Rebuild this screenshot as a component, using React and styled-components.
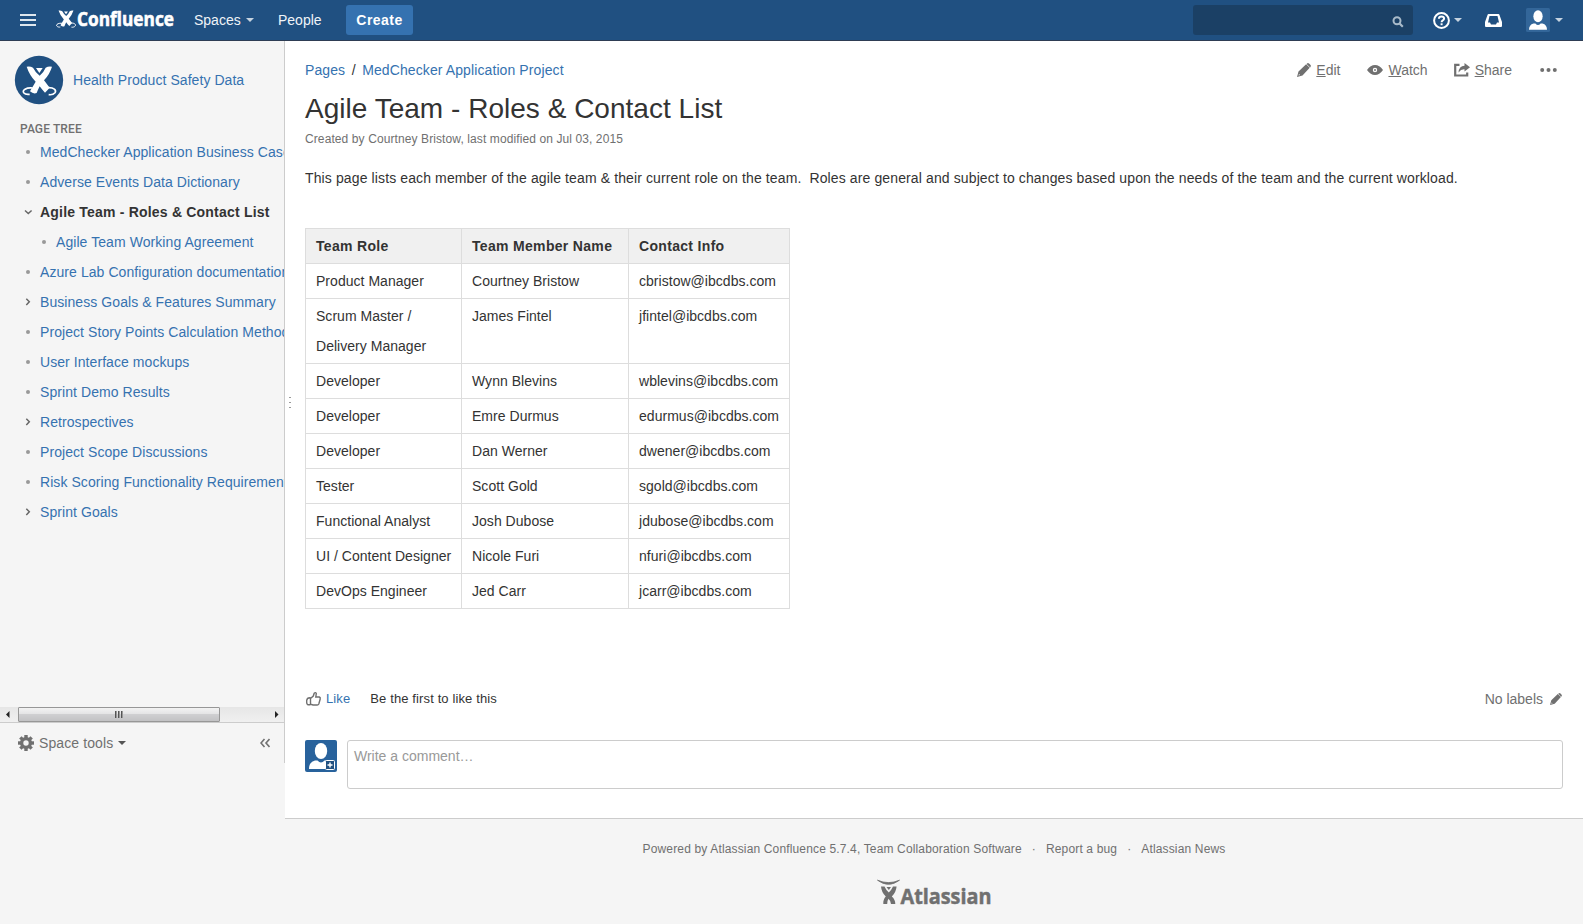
import React from "react";
import styled, { createGlobalStyle, css } from "styled-components";

const GlobalStyle = createGlobalStyle`
  * { box-sizing: border-box; }
  html, body { margin: 0; padding: 0; }
  body {
    background: #f5f5f5;
    color: #333;
    font: 14px/20px Arial, "Liberation Sans", sans-serif;
    overflow: hidden;
  }
`;

const LINK = "#3572b0";
const GREY = "#707070";

/* ---------- header ---------- */
const Header = styled.header`
  display: flex;
  align-items: center;
  height: 41px;
  padding: 0 20px;
  background: #205081;
  border-bottom: 1px solid #2e3d54;
  color: #fff;
`;
const MenuIcon = styled.svg`
  width: 16px;
  height: 12px;
  margin-right: 20px;
`;
const BrandLogo = styled.svg`
  width: 120px;
  height: 24px;
  margin-right: 18px;
`;
const NavItem = styled.a`
  display: flex;
  align-items: center;
  width: ${(p) => p.$width}px;
  color: #f0f4f8;
`;
const Caret = styled.span`
  border: 4px solid transparent;
  border-top-color: currentColor;
  border-bottom: 0;
  margin-left: ${(p) => p.$gap ?? 5}px;
  color: ${(p) => p.$color || "#c6d3e0"};
`;
const CreateButton = styled.button`
  width: 67px;
  height: 30px;
  padding: 0;
  border: 0;
  border-radius: 3px;
  background: #3572b0;
  color: #fff;
  font: bold 14px/20px Arial, "Liberation Sans", sans-serif;
  letter-spacing: 0.45px;
`;
const Search = styled.div`
  display: flex;
  align-items: center;
  justify-content: flex-end;
  width: 220px;
  height: 30px;
  margin-left: auto;
  margin-right: 20px;
  padding: 3px 9px 0 0;
  border-radius: 3px;
  background: #1b4065;
`;
const HeaderTool = styled.div`
  display: flex;
  align-items: center;
  width: ${(p) => p.$width}px;
`;

/* ---------- frame ---------- */
const Body = styled.div`
  display: flex;
  align-items: flex-start;
`;
const Sidebar = styled.aside`
  display: flex;
  flex-direction: column;
  flex: none;
  width: 285px;
  height: 722px;
  border-right: 1px solid #ccc;
  background: #f5f5f5;
`;
const Column = styled.div`
  flex: 1;
  min-width: 0;
`;

/* ---------- sidebar ---------- */
const SpaceHeader = styled.div`
  display: flex;
  align-items: center;
  gap: 9px;
  padding: 14px 0 0 14px;
  color: ${LINK};
  letter-spacing: 0.06px;
`;
const TreeTitle = styled.h5`
  margin: 14px 0 0 20px;
  color: ${GREY};
  font: 500 12px/20px Roboto, Arial, sans-serif;
  letter-spacing: 0.12px;
`;
const Tree = styled.ul`
  flex: 1;
  margin: -2px 0 0;
  padding: 0;
  list-style: none;
  overflow: hidden;
`;
const TreeRow = styled.li`
  display: flex;
  align-items: center;
  height: 30px;
  padding-left: ${(p) => (p.$nested ? 36 : 20)}px;
  white-space: nowrap;
  color: ${LINK};
  letter-spacing: 0.07px;
  ${(p) =>
    p.$current &&
    css`
      color: #333;
      font-weight: bold;
      letter-spacing: 0.2px;
    `}
`;
const Marker = styled.svg`
  flex: none;
  width: 16px;
  height: 16px;
  margin-right: 4px;
`;
const ScrollTrack = styled.div`
  display: flex;
  align-items: center;
  height: 15px;
  background: linear-gradient(#e6e6e6, #f0f0f0);
`;
const ScrollArrow = styled.svg`
  width: 18px;
  height: 15px;
`;
const ScrollThumb = styled.div`
  display: flex;
  align-items: center;
  justify-content: center;
  gap: 2px;
  width: 202px;
  height: 15px;
  margin-right: auto;
  padding-right: 2px;
  border: 1px solid #979797;
  border-radius: 1px;
  background: linear-gradient(#f3f3f3 0, #e4e4e5 45%, #cfcfd1 50%, #c2c2c4 100%);
`;
const Grip = styled.i`
  width: 1px;
  height: 7px;
  background: #555;
  box-shadow: 1px 0 #999;
`;
const SpaceTools = styled.div`
  display: flex;
  align-items: center;
  height: 41px;
  padding: 0 14px 0 18px;
  border-top: 1px solid #ccc;
  color: ${GREY};
`;
const ToolsLabel = styled.span`
  margin-left: 5px;
  letter-spacing: 0.1px;
`;
const CollapseIcon = styled.svg`
  margin-left: auto;
`;

/* ---------- content ---------- */
const Content = styled.main`
  position: relative;
  height: 778px;
  padding: 19px 20px 0;
  border-bottom: 1px solid #ccc;
  background: #fff;
`;
const ResizeGrip = styled.svg`
  position: absolute;
  left: 3px;
  top: 355px;
`;
const TopLine = styled.div`
  display: flex;
  justify-content: space-between;
  height: 20px;
`;
const Crumbs = styled.nav`
  display: flex;
  gap: 6.5px;
  letter-spacing: 0.1px;
  a { color: ${LINK}; }
`;
const Actions = styled.div`
  display: flex;
  padding-right: 6px;
  color: ${GREY};
`;
const Action = styled.a`
  display: flex;
  align-items: center;
  gap: 5px;
  margin-left: ${(p) => p.$before ?? 26}px;
`;
const Title = styled.h1`
  margin: 11px 0 0;
  font-size: 28px;
  line-height: 36px;
  font-weight: normal;
  letter-spacing: 0.02px;
`;
const Byline = styled.div`
  margin-top: 2px;
  color: ${GREY};
  font-size: 12px;
  line-height: 20px;
  letter-spacing: 0.1px;
`;
const Intro = styled.p`
  margin: 14px 0 0;
  line-height: 30px;
  white-space: pre;
  letter-spacing: 0.118px;
`;
const Table = styled.table`
  margin-top: 35px;
  width: 485px;
  table-layout: fixed;
  border-collapse: collapse;
  line-height: 30px;
  letter-spacing: 0.03px;
  th, td {
    padding: 2px 0 2px 10px;
    border: 1px solid #ddd;
    text-align: left;
    vertical-align: top;
    white-space: pre;
  }
  th {
    background: #f0f0f0;
    letter-spacing: 0.32px;
  }
`;
const Col = styled.col`
  width: ${(p) => p.$width}px;
`;
const LikeLine = styled.div`
  display: flex;
  align-items: center;
  height: 20px;
  margin-top: 80px;
  font-size: 13px;
  letter-spacing: 0.12px;
`;
const LikeLink = styled.a`
  margin: 0 20px 0 4px;
  color: ${LINK};
`;
const Labels = styled.div`
  display: flex;
  align-items: center;
  gap: 7px;
  margin-left: auto;
  padding-right: 1px;
  color: ${GREY};
  font-size: 14px;
  letter-spacing: 0;
`;
const CommentLine = styled.div`
  display: flex;
  gap: 10px;
  margin-top: 31px;
`;
const CommentBox = styled.div`
  flex: 1;
  height: 49px;
  padding: 5px 6px;
  border: 1px solid #ccc;
  border-radius: 3px;
  color: #999;
`;

/* ---------- footer ---------- */
const Footer = styled.footer`
  display: flex;
  flex-direction: column;
  align-items: center;
  padding-top: 20px;
  color: ${GREY};
  font-size: 12px;
`;
const FooterLinks = styled.div`
  display: flex;
  gap: 10px;
  letter-spacing: 0.15px;
`;
const FooterLogo = styled.svg`
  width: 115px;
  height: 26px;
  margin-top: 20px;
`;

/* Figure with raised arms standing over two swirls. */
const Figure = () => (
  <g fill="#fff">
    <path d="M44 43Q55 41 63 46Q70 60 83 70Q95 60 101 46Q109 41 120 43Q113 66 96 84L113 106Q106 114 99 121Q90 112 83 102Q78 112 74 122Q64 126 54 117Q62 103 71 88Q52 68 44 43Z" />
    <path d="M72 47H92L82 62Z" />
    <path
      fill="none"
      stroke="#fff"
      strokeWidth="5"
      d="M62 107C42 105 30 114 35 121C39 126 46 127 53 126M108 106C126 105 134 114 129 121C125 126 117 128 110 127"
    />
  </g>
);

const SpaceLogo = () => (
  <svg width="50" height="50" viewBox="6 8 150 150">
    <circle cx="81" cy="83" r="72.500" fill="#205081" />
    <Figure />
  </svg>
);

const Pencil = ({ size = 14 }) => (
  <svg width={size} height={size} viewBox="0 0 14 14" fill={GREY}>
    <path
      fillRule="evenodd"
      d="M9.600.900 13.100 4.400 13.700 3.500Q14.200 2.500 13.300 1.700L12.300.700Q11.200-.200 10.400.200ZM9.100 1.300 1.500 8.500 0 14 5.500 12.500 12.700 4.800ZM1.500 12.600 2 11 3.100 12.100Z"
    />
  </svg>
);

const Person = ({ size, fill, badge }) => (
  <svg width={size} height={size} viewBox="0 0 32 32">
    <rect width="32" height="32" rx="2" fill={fill} />
    <ellipse cx="16" cy="11" rx="6.200" ry="8" fill="#fff" />
    <path d="M4 29Q4 22 10 20.500L12.500 20.500Q16 24.500 19.500 20.500L22 20.500Q28 22 28 29Z" fill="#fff" />
    {badge && (
      <g>
        <rect x="20.500" y="20.500" width="9" height="9" rx="1" fill="#205081" stroke="#fff" />
        <path d="M25 22.500V27.500M22.500 25H27.500" stroke="#fff" strokeWidth="1.400" />
      </g>
    )}
  </svg>
);

const markers = {
  dot: <circle cx="8" cy="8" r="2" fill="#999" />,
  open: <path d="M5 6.500 8.300 9.500 11.600 6.500" fill="none" stroke="#666" strokeWidth="1.500" />,
  closed: <path d="M6.300 4.700 9.300 7.800 6.300 10.900" fill="none" stroke="#666" strokeWidth="1.500" />,
};

const pages = [
  ["MedChecker Application Business Case", "dot"],
  ["Adverse Events Data Dictionary", "dot"],
  ["Agile Team - Roles & Contact List", "open", { $current: true }],
  ["Agile Team Working Agreement", "dot", { $nested: true }],
  ["Azure Lab Configuration documentation", "dot"],
  ["Business Goals & Features Summary", "closed"],
  ["Project Story Points Calculation Methodology", "dot"],
  ["User Interface mockups", "dot"],
  ["Sprint Demo Results", "dot"],
  ["Retrospectives", "closed"],
  ["Project Scope Discussions", "dot"],
  ["Risk Scoring Functionality Requirements", "dot"],
  ["Sprint Goals", "closed"],
];

const team = [
  ["Product Manager", "Courtney Bristow", "cbristow@ibcdbs.com"],
  ["Scrum Master /\nDelivery Manager", "James Fintel", "jfintel@ibcdbs.com"],
  ["Developer", "Wynn Blevins", "wblevins@ibcdbs.com"],
  ["Developer", "Emre Durmus", "edurmus@ibcdbs.com"],
  ["Developer", "Dan Werner", "dwener@ibcdbs.com"],
  ["Tester", "Scott Gold", "sgold@ibcdbs.com"],
  ["Functional Analyst", "Josh Dubose", "jdubose@ibcdbs.com"],
  ["UI / Content Designer", "Nicole Furi", "nfuri@ibcdbs.com"],
  ["DevOps Engineer", "Jed Carr", "jcarr@ibcdbs.com"],
];

const teeth = [0, 45, 90, 135, 180, 225, 270, 315];

function TopBar() {
  return (
    <Header>
      <MenuIcon viewBox="0 0 16 12">
        <path d="M0 1H16M0 6H16M0 11H16" stroke="#dfe7ee" strokeWidth="2" />
      </MenuIcon>
      <BrandLogo viewBox="0 0 120 24">
        <svg x="0" y="2" width="20" height="18" viewBox="31 40 102 91" preserveAspectRatio="none">
          <Figure />
        </svg>
        <text
          x="21"
          y="17.500"
          fill="#fff"
          stroke="#fff"
          strokeWidth=".6"
          fontFamily="Open Sans"
          fontWeight="bold"
          fontSize="20"
          textLength="97"
          lengthAdjust="spacingAndGlyphs"
        >
          Confluence
        </text>
      </BrandLogo>
      <NavItem $width={84}>Spaces<Caret /></NavItem>
      <NavItem $width={68}>People</NavItem>
      <CreateButton>Create</CreateButton>
      <Search>
        <svg width="12" height="12" viewBox="0 0 12 12" fill="none" stroke="#a9bac9">
          <circle cx="5" cy="4.800" r="3.500" strokeWidth="2" />
          <path d="M7.600 7.500 10.800 10.800" strokeWidth="2.200" />
        </svg>
      </Search>
      <HeaderTool $width={52}>
        <svg width="17" height="17" viewBox="0 0 17 17" fill="none" stroke="#fff">
          <circle cx="8.500" cy="8.500" r="7.400" strokeWidth="2" />
          <path d="M5.900 6.700Q6 4.400 8.500 4.400T11.100 6.500Q11.100 7.600 9.800 8.400Q8.600 9.100 8.600 10.200" strokeWidth="2" />
          <path d="M8.600 11.300V13.200" strokeWidth="2" />
        </svg>
        <Caret $gap={4} />
      </HeaderTool>
      <HeaderTool $width={41}>
        <svg width="17" height="13" viewBox="0 0 17 13">
          <path
            fill="#fff"
            fillRule="evenodd"
            d="M3.500 0H13.500Q14.200 0 14.400.700L17 8V12Q17 13 16 13H1Q0 13 0 12V8L2.600.700Q2.800 0 3.500 0ZM4.500 2 3 8.500H5L6 10.500H11L12 8.500H14L12.500 2Z"
          />
        </svg>
      </HeaderTool>
      <HeaderTool $width={37}>
        <Person size={24} fill="#336699" />
        <Caret />
      </HeaderTool>
    </Header>
  );
}

function SidePanel() {
  return (
    <Sidebar>
      <SpaceHeader><SpaceLogo />Health Product Safety Data</SpaceHeader>
      <TreeTitle>PAGE TREE</TreeTitle>
      <Tree>
        {pages.map(([name, marker, flags]) => (
          <TreeRow key={name} {...flags}>
            <Marker viewBox="0 0 16 16">{markers[marker]}</Marker>
            {name}
          </TreeRow>
        ))}
      </Tree>
      <ScrollTrack>
        <ScrollArrow viewBox="0 0 18 15"><path d="M9.500 4V11L6 7.500Z" fill="#222" /></ScrollArrow>
        <ScrollThumb><Grip /><Grip /><Grip /></ScrollThumb>
        <ScrollArrow viewBox="0 0 18 15"><path d="M9 4V11L12.500 7.500Z" fill="#222" /></ScrollArrow>
      </ScrollTrack>
      <SpaceTools>
        <svg width="16" height="16" viewBox="-8 -8 16 16">
          {teeth.map((a) => (
            <rect key={a} x="-1.700" y="-8" width="3.400" height="4" fill={GREY} transform={`rotate(${a})`} />
          ))}
          <circle r="4.400" fill="none" stroke={GREY} strokeWidth="3.400" />
        </svg>
        <ToolsLabel>Space tools</ToolsLabel>
        <Caret $gap={5} $color="#555" />
        <CollapseIcon width="10" height="10" viewBox="0 0 10 10" fill="none" stroke={GREY} strokeWidth="1.600">
          <path d="M4.500 1 1 5 4.500 9M9.500 1 6 5 9.500 9" />
        </CollapseIcon>
      </SpaceTools>
    </Sidebar>
  );
}

function PageContent() {
  return (
    <Content>
      <ResizeGrip width="4" height="13" viewBox="0 0 4 13" fill="#999">
        <path d="M1 1H3V2H1ZM1 6H3V7H1ZM1 11H3V12H1Z" />
      </ResizeGrip>
      <TopLine>
        <Crumbs>
          <a>Pages</a>
          <span>/</span>
          <a>MedChecker Application Project</a>
        </Crumbs>
        <Actions>
          <Action><Pencil /><span><u>E</u>dit</span></Action>
          <Action $before={27}>
            <svg width="16" height="10" viewBox="0 0 16 10" fill={GREY}>
              <path fillRule="evenodd" d="M0 5Q3.500 0 8 0T16 5Q12.500 10 8 10T0 5ZM8 2.800A2.200 2.200 0 0 0 8 7.200A2.200 2.200 0 0 0 8 2.800Z" />
              <path d="M8 3.800 9.200 5 8 6.200 6.800 5Z" />
            </svg>
            <span><u>W</u>atch</span>
          </Action>
          <Action>
            <svg width="16" height="14" viewBox="0 0 16 14">
              <path d="M5.500 1.800H1.200V12.500H13.200V9.500" fill="none" stroke={GREY} strokeWidth="2.200" />
              <path d="M10.500 0 16 4.200 10.500 8.500V6.300Q7 6 4.500 9.500Q5 3 10.500 2.800Z" fill={GREY} />
            </svg>
            <span><u>S</u>hare</span>
          </Action>
          <Action $before={28}>
            <svg width="17" height="4" viewBox="0 0 17 4" fill={GREY}>
              <circle cx="2.200" cy="2" r="2" /><circle cx="8.500" cy="2" r="2" /><circle cx="14.800" cy="2" r="2" />
            </svg>
          </Action>
        </Actions>
      </TopLine>
      <Title>Agile Team - Roles &amp; Contact List</Title>
      <Byline>Created by Courtney Bristow, last modified on Jul 03, 2015</Byline>
      <Intro>
        {"This page lists each member of the agile team & their current role on the team.  Roles are general and subject to changes based upon the needs of the team and the current workload."}
      </Intro>
      <Table>
        <colgroup><Col $width={156} /><Col $width={167} /><Col $width={161} /></colgroup>
        <thead>
          <tr><th>Team Role</th><th>Team Member Name</th><th>Contact Info</th></tr>
        </thead>
        <tbody>
          {team.map((row) => (
            <tr key={row[1]}>{row.map((cell) => <td key={cell}>{cell}</td>)}</tr>
          ))}
        </tbody>
      </Table>
      <LikeLine>
        <svg width="17" height="16" viewBox="0 0 17 16" fill="none" stroke={GREY} strokeWidth="1.400">
          <path d="M5.500 7.500 8.300 5 9.200 2.200Q10.500 1 11.300 2.500L10.800 6H14.300Q15.600 6.500 15.200 8L13.800 13Q13.300 14 12.300 14H8L5.500 13.200ZM5.500 6.800Q2 6.500 1.700 9.500Q1.500 13.500 3 13.700H5.500" />
        </svg>
        <LikeLink>Like</LikeLink>
        <span>Be the first to like this</span>
        <Labels>No labels<Pencil size={12} /></Labels>
      </LikeLine>
      <CommentLine>
        <Person size={32} fill="#28629c" badge />
        <CommentBox>Write a comment…</CommentBox>
      </CommentLine>
    </Content>
  );
}

function PageFooter() {
  return (
    <Footer>
      <FooterLinks>
        <span>Powered by Atlassian Confluence 5.7.4, Team Collaboration Software</span>
        <span>·</span>
        <span>Report a bug</span>
        <span>·</span>
        <span>Atlassian News</span>
      </FooterLinks>
      <FooterLogo viewBox="0 0 115 26" fill={GREY}>
        <path d="M.500 1.200Q11.500 6 22.500 1.200Q11.500 9.500.500 1.200Z" stroke={GREY} strokeWidth=".8" />
        <path d="M4 7.500H7.500Q9 11 11.800 13.500Q14.500 11 16 7.500H19.600Q19 13.500 14.800 17.500Q18.300 20.500 18.300 25H14Q13.800 22 11.500 19.800Q10.300 21.500 10.200 25H6.300Q6 20.500 8.800 17.500Q4.500 13.500 4 7.500Z" />
        <path d="M9.500 8H14L11.800 11Z" />
        <text
          x="23.500"
          y="24.500"
          stroke={GREY}
          strokeWidth=".5"
          fontFamily="Open Sans"
          fontWeight="bold"
          fontSize="22"
          textLength="91"
          lengthAdjust="spacingAndGlyphs"
        >
          Atlassian
        </text>
      </FooterLogo>
    </Footer>
  );
}

export default function App() {
  return (
    <>
      <GlobalStyle />
      <TopBar />
      <Body>
        <SidePanel />
        <Column>
          <PageContent />
          <PageFooter />
        </Column>
      </Body>
    </>
  );
}
